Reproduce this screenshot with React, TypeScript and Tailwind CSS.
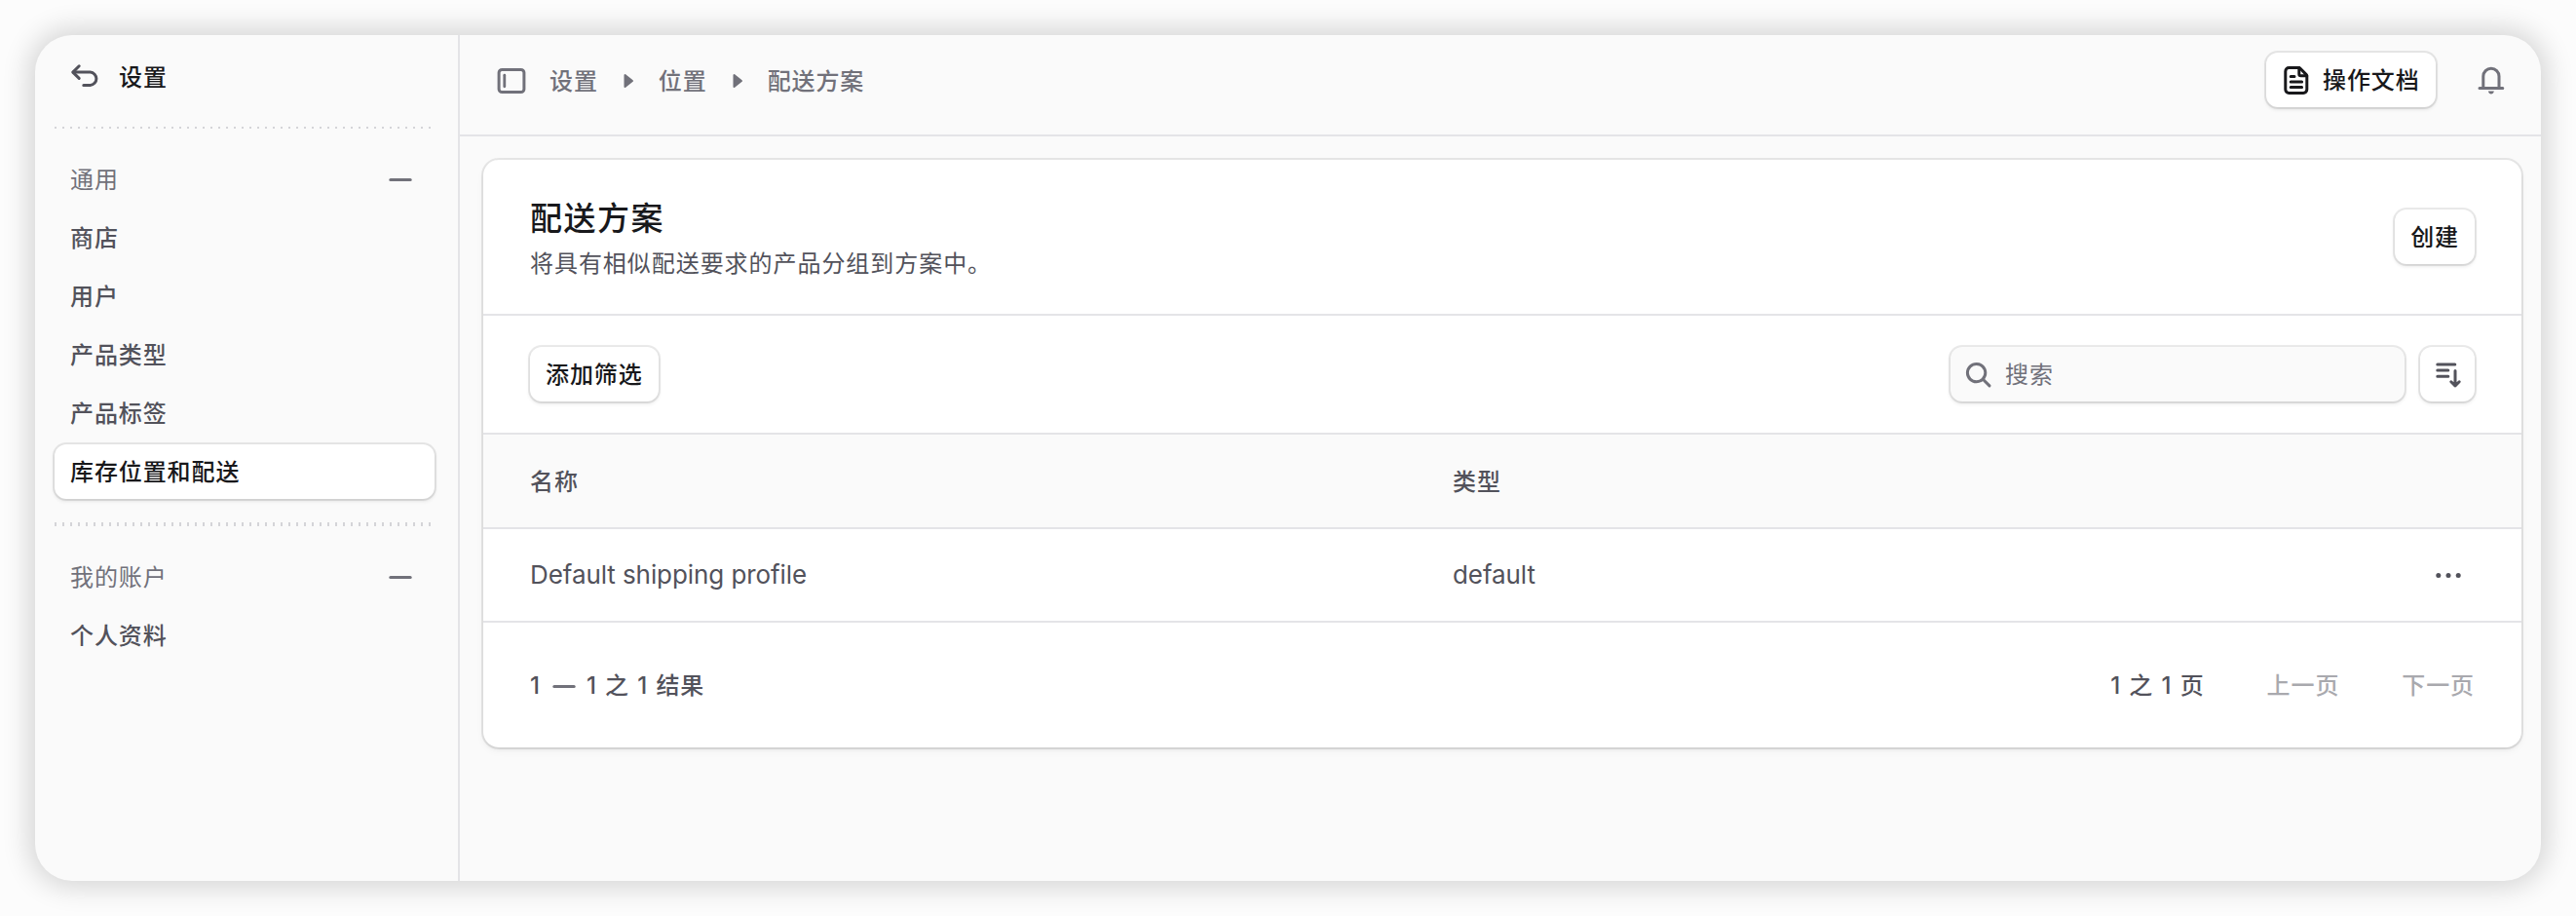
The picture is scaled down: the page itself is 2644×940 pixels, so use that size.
import type { ReactNode } from "react";

const navGroups = [
  {
    title: "通用",
    items: ["商店", "用户", "产品类型", "产品标签", "库存位置和配送"],
  },
  { title: "我的账户", items: ["个人资料"] },
];

const activeItem = "库存位置和配送";
const crumbs = ["设置", "位置", "配送方案"];

const profiles = [{ name: "Default shipping profile", type: "default" }];

const Icon = ({ children, className = "" }: { children: ReactNode; className?: string }) => (
  <svg
    width="30"
    height="30"
    viewBox="0 0 15 15"
    fill="none"
    stroke="currentColor"
    strokeWidth="1.5"
    strokeLinecap="round"
    strokeLinejoin="round"
    className={`shrink-0 ${className}`}
  >
    {children}
  </svg>
);

const ArrowBackIcon = () => (
  <Icon className="text-[#52525b]">
    <path d="M4.6 1.9 1.4 5.05l3.2 3.15" />
    <path d="M1.6 5.05h8.7a3.33 3.33 0 0 1 0 6.65H6.9" />
  </Icon>
);

const MinusIcon = () => (
  <Icon className="text-[#71717a]">
    <path d="M2.4 7.75h10.2" />
  </Icon>
);

const SidebarIcon = () => (
  <Icon className="text-[#71717a]">
    <rect x="1.05" y="2.2" width="12.9" height="11.6" rx="1.6" />
    <path d="M3.9 5.1v5.8" strokeWidth="1.4" />
  </Icon>
);

const TriangleIcon = () => (
  <svg width="30" height="30" viewBox="0 0 30 30" className="text-[#71717a]">
    <path
      d="M11.500 10v12l7.500-6z"
      fill="currentColor"
      stroke="currentColor"
      strokeWidth="2"
      strokeLinejoin="round"
    />
  </svg>
);

const DocumentIcon = () => (
  <Icon className="text-[#18181b]">
    <path d="M4.6 5.8h1.9M4.6 8.5h5.7M4.6 11.2h5.7M8.9 1.3v3.2c0 .5.4.9.9.9h3.1" />
    <path d="M1.9 12.4V3.1c0-1 .8-1.8 1.8-1.8h5c.3 0 .6.1.8.3l3.1 3.2c.2.2.3.5.3.8v6.800c0 1-.8 1.800-1.800 1.800H3.700c-1 0-1.800-.8-1.800-1.800z" />
  </Icon>
);

const BellIcon = () => (
  <Icon className="text-[#71717a]">
    <path d="M11.500 11.700V5.650a4.050 4.050 0 0 0-8.100 0v6.050M1.500 11.750h11.900" />
    <path d="M5.950 13.250h3c-.2.9-.8 1.500-1.500 1.500s-1.300-.6-1.500-1.500z" fill="currentColor" stroke="none" />
  </Icon>
);

const SearchIcon = () => (
  <Icon className="text-[#71717a]">
    <circle cx="6.300" cy="6.800" r="4.600" />
    <path d="m9.650 10.100 3.350 3.350" />
  </Icon>
);

const SortIcon = () => (
  <Icon className="text-[#52525b]">
    <path d="M2.400 2.500h9M2.400 5.500h5.500M2.400 8.600h5.500M11.500 5.700v7.700M9.400 11.400l2.100 2.050 2.100-2.050" />
  </Icon>
);

const EllipsisIcon = () => (
  <Icon className="text-[#52525b]">
    <g fill="currentColor" stroke="none">
      <circle cx="2.400" cy="7.750" r="1.250" />
      <circle cx="7.500" cy="7.750" r="1.250" />
      <circle cx="12.600" cy="7.750" r="1.250" />
    </g>
  </Icon>
);

const surface = "rounded-[12px] shadow-[0_0_0_2px_rgba(0,0,0,0.08),0_2px_4px_0_rgba(0,0,0,0.12)]";

const Button = ({ children, className = "" }: { children: ReactNode; className?: string }) => (
  <button
    type="button"
    className={`flex h-14 shrink-0 items-center bg-white font-medium text-[#18181b] ${surface} ${className}`}
  >
    {children}
  </button>
);

const Sidebar = () => (
  <aside className="flex w-[436px] shrink-0 flex-col border-r-2 border-[#e4e4e7]">
    <div className="flex h-[94px] items-center gap-5 pb-2 pl-9 font-medium text-[#18181b]">
      <ArrowBackIcon />
      <span className="pt-0.5">设置</span>
    </div>
    <Dots className="h-0.5" />
    {navGroups.map((group, i) => (
      <div key={group.title}>
        {i > 0 && <Dots className="h-1" />}
        <div className="flex flex-col gap-1 py-6 pr-6 pl-5">
          <div className="flex h-14 items-center justify-between pr-5 pl-4 text-[#71717a]">
            <span className="pt-0.5">{group.title}</span>
            <MinusIcon />
          </div>
          {group.items.map((item) => (
            <a
              key={item}
              className={
                item === activeItem
                  ? `flex h-14 items-center bg-white pt-0.5 pl-4 font-medium text-[#18181b] ${surface}`
                  : "flex h-14 items-center pt-0.5 pl-4 font-medium text-[#52525b]"
              }
            >
              {item}
            </a>
          ))}
        </div>
      </div>
    ))}
  </aside>
);

const Dots = ({ className }: { className: string }) => (
  <div
    className={`mr-6 ml-5 bg-[repeating-linear-gradient(to_right,#d4d4d8_0px,#d4d4d8_2px,transparent_2px,transparent_8px)] ${className}`}
  />
);

const Topbar = () => (
  <header className="flex h-[104px] items-start justify-between border-b-2 border-[#e4e4e7] pt-[18px] pr-9 pl-[38px]">
    <div className="flex h-14 items-center font-medium text-[#71717a]">
      <SidebarIcon />
      <nav className="ml-6 flex items-center">
        {crumbs.map((crumb, i) => (
          <div key={crumb} className="flex items-center">
            {i > 0 && (
              <span className="mx-4">
                <TriangleIcon />
              </span>
            )}
            <span className="pt-[3px]">{crumb}</span>
          </div>
        ))}
      </nav>
    </div>
    <div className="flex items-center gap-[42px]">
      <Button className="w-[174px] gap-3 pl-4">
        <DocumentIcon />
        <span className="pt-0.5">操作文档</span>
      </Button>
      <BellIcon />
    </div>
  </header>
);

const ProfileList = () => (
  <section className="flex flex-col divide-y-2 divide-[#e4e4e7] overflow-hidden rounded-[16px] bg-white text-[#52525b] shadow-[0_0_0_2px_rgba(0,0,0,0.08),0_2px_4px_-1px_rgba(0,0,0,0.1),0_4px_8px_0_rgba(0,0,0,0.04)]">
    <div className="flex h-[160px] items-center justify-between px-12">
      <div className="pt-2">
        <h1 className="text-[33px] leading-[48px] font-medium tracking-[1.5px] text-[#18181b]">
          配送方案
        </h1>
        <p className="leading-[46px] tracking-[0.95px]">将具有相似配送要求的产品分组到方案中。</p>
      </div>
      <Button className="px-4 pt-0.5">创建</Button>
    </div>
    <div className="flex h-[122px] items-center justify-between px-12">
      <Button className="px-4 pt-0.5">添加筛选</Button>
      <div className="flex gap-4">
        <div
          className={`flex h-14 w-[466px] items-center gap-3 bg-[#fafafa] pl-3.5 text-[#71717a] ${surface}`}
        >
          <SearchIcon />
          <span className="pt-0.5">搜索</span>
        </div>
        <Button className="w-14 justify-center">
          <SortIcon />
        </Button>
      </div>
    </div>
    <div className="flex h-[97px] items-center bg-[#fafafa] px-12 pt-0.5 font-medium">
      <span className="w-[947px]">名称</span>
      <span>类型</span>
    </div>
    {profiles.map((profile) => (
      <div
        key={profile.name}
        className="flex h-[96px] items-center pr-[60px] pl-12 text-[26px] tracking-[-0.08px]"
      >
        <span className="w-[947px]">{profile.name}</span>
        <span className="grow">{profile.type}</span>
        <EllipsisIcon />
      </div>
    ))}
    <div className="flex h-[128px] items-center px-12 pt-0.5 font-medium [word-spacing:1px]">
      <div className="flex grow items-center">
        <span>1</span>
        <span className="mr-2 ml-[9px]">
          <MinusIcon />
        </span>
        <span>1 之 1 结果</span>
      </div>
      <span>1 之 1 页</span>
      <button type="button" className="ml-16 font-medium text-[#a9a9ae]">
        上一页
      </button>
      <button type="button" className="ml-16 font-medium text-[#a9a9ae]">
        下一页
      </button>
    </div>
  </section>
);

export default function App() {
  return (
    <div className="h-[940px] w-[2644px] bg-[#fcfcfc] p-9 font-[Inter,'Noto_Sans_CJK_SC',sans-serif] text-[24px] leading-none tracking-[0.9px]">
      <div className="flex h-[868px] overflow-hidden rounded-[38px] bg-[#fafafa] shadow-[0_0_28px_6px_rgba(0,0,0,0.16)]">
        <Sidebar />
        <main className="flex grow flex-col">
          <Topbar />
          <div className="px-6 pt-6 pr-5">
            <ProfileList />
          </div>
        </main>
      </div>
    </div>
  );
}
